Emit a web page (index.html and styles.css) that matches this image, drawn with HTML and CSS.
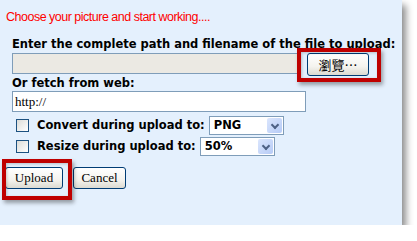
FILE: index.html
```html
<!DOCTYPE html>
<html lang="en">
<head>
    <meta charset="UTF-8">
    <title>Upload picture</title>
    <link rel="stylesheet" href="styles.css">
</head>
<body>
    <div class="panel">
        <p class="title">Choose your picture and start working....</p>
        <div class="form">
            <label class="label">Enter the complete path and filename of the file to upload:</label>
            <div class="file-row">
                <span class="file-box"></span>
                <span class="mark mark-browse">
                    <button class="btn browse">瀏覽…</button>
                </span>
            </div>
            <label class="label web">Or fetch from web:</label>
            <input type="text" class="url" value="http://">
            <div class="option first">
                <span class="check"></span>
                <span class="opt-label">Convert during upload to:</span>
                <span class="select convert">PNG<i class="arrow"></i></span>
            </div>
            <div class="option">
                <span class="check"></span>
                <span class="opt-label">Resize during upload to:</span>
                <span class="select">50%<i class="arrow"></i></span>
            </div>
        </div>
        <div class="actions">
            <span class="mark mark-upload">
                <button class="btn">Upload</button>
            </span>
            <button class="btn cancel">Cancel</button>
        </div>
    </div>
</body>
</html>
```
FILE: styles.css
```css
body {
    margin: 0;
    background: white;
    font-family: "DejaVu Sans", Verdana, sans-serif;
}
.panel {
    width: 402px;
    height: 225px;
    box-sizing: border-box;
    padding-top: 9px;
    background: #e4f0fd;
    box-shadow: 4px 5px 7px rgba(0, 0, 0, 0.45);
}
.title {
    margin: 0 0 0 6px;
    font-family: "Liberation Sans", Arial, sans-serif;
    font-size: 12.5px;
    letter-spacing: -0.5px;
    line-height: 16px;
    color: #ff0000;
}
.form {
    padding-left: 12px;
}
.label {
    display: block;
    margin-top: 12px;
    font-size: 11.5px;
    font-weight: bold;
    line-height: 15px;
    color: #000;
}
.label.web {
    margin-top: 0;
}
.file-row {
    display: flex;
    align-items: flex-start;
    margin-top: 1px;
    height: 23px;
}
.file-box {
    width: 286px;
    height: 21px;
    box-sizing: border-box;
    border: 1px solid #7f9db9;
    background: #ebe9e3;
}
.btn {
    height: 22px;
    padding: 0 6px;
    border: 1px solid #003c74;
    border-radius: 3px;
    background: linear-gradient(#ffffff, #f4f3ee 60%, #dcdad1);
    font-family: "Liberation Serif", "Times New Roman", serif;
    font-size: 13px;
    color: #000;
}
.browse {
    width: 62px;
    height: 23px;
    font-family: "Noto Sans CJK TC", sans-serif;
    font-size: 13px;
}
.mark {
    position: relative;
    display: inline-block;
}
.mark::after {
    content: "";
    position: absolute;
    border: 4px solid #bf0000;
    box-shadow: 2px 3px 4px rgba(0, 0, 0, 0.35), inset 1px 1px 3px rgba(0, 0, 0, 0.2);
}
.mark-browse {
    margin-left: 9px;
}
.mark-browse::after {
    left: -10px;
    top: -5px;
    width: 76px;
    height: 26px;
}
.url {
    display: block;
    width: 294px;
    height: 21px;
    box-sizing: border-box;
    margin: 0;
    padding: 0 2px;
    border: 1px solid #7f9db9;
    background: white;
    font-family: "Liberation Serif", "Times New Roman", serif;
    font-size: 13px;
}
.option {
    display: flex;
    align-items: center;
    height: 20px;
    margin-top: 1px;
    font-size: 11.5px;
    font-weight: bold;
}
.option.first {
    margin-top: 3px;
}
.check {
    width: 13px;
    height: 13px;
    box-sizing: border-box;
    margin: 0 8px 0 4px;
    border: 1px solid #1c5180;
    background: linear-gradient(135deg, #dcdcd7, #ffffff);
}
.opt-label {
    margin-right: 4px;
}
.select {
    position: relative;
    width: 75px;
    height: 19px;
    box-sizing: border-box;
    padding-left: 4px;
    border: 1px solid #7f9db9;
    background: white;
    line-height: 17px;
}
.arrow {
    position: absolute;
    right: 1px;
    top: 1px;
    width: 15px;
    height: 15px;
    border-radius: 2px;
    background: linear-gradient(135deg, #dbe6fd, #b6cbf6);
}
.arrow::after {
    content: "";
    position: absolute;
    left: 5px;
    top: 4px;
    width: 4px;
    height: 4px;
    border-right: 2px solid #4d6185;
    border-bottom: 2px solid #4d6185;
    transform: rotate(45deg);
}
.actions {
    display: flex;
    gap: 10px;
    margin: 11px 0 0 5px;
}
.actions .btn {
    width: 58px;
}
.actions .cancel {
    width: 53px;
}
.mark-upload::after {
    left: -3px;
    top: -8px;
    width: 62px;
    height: 33px;
}
```
